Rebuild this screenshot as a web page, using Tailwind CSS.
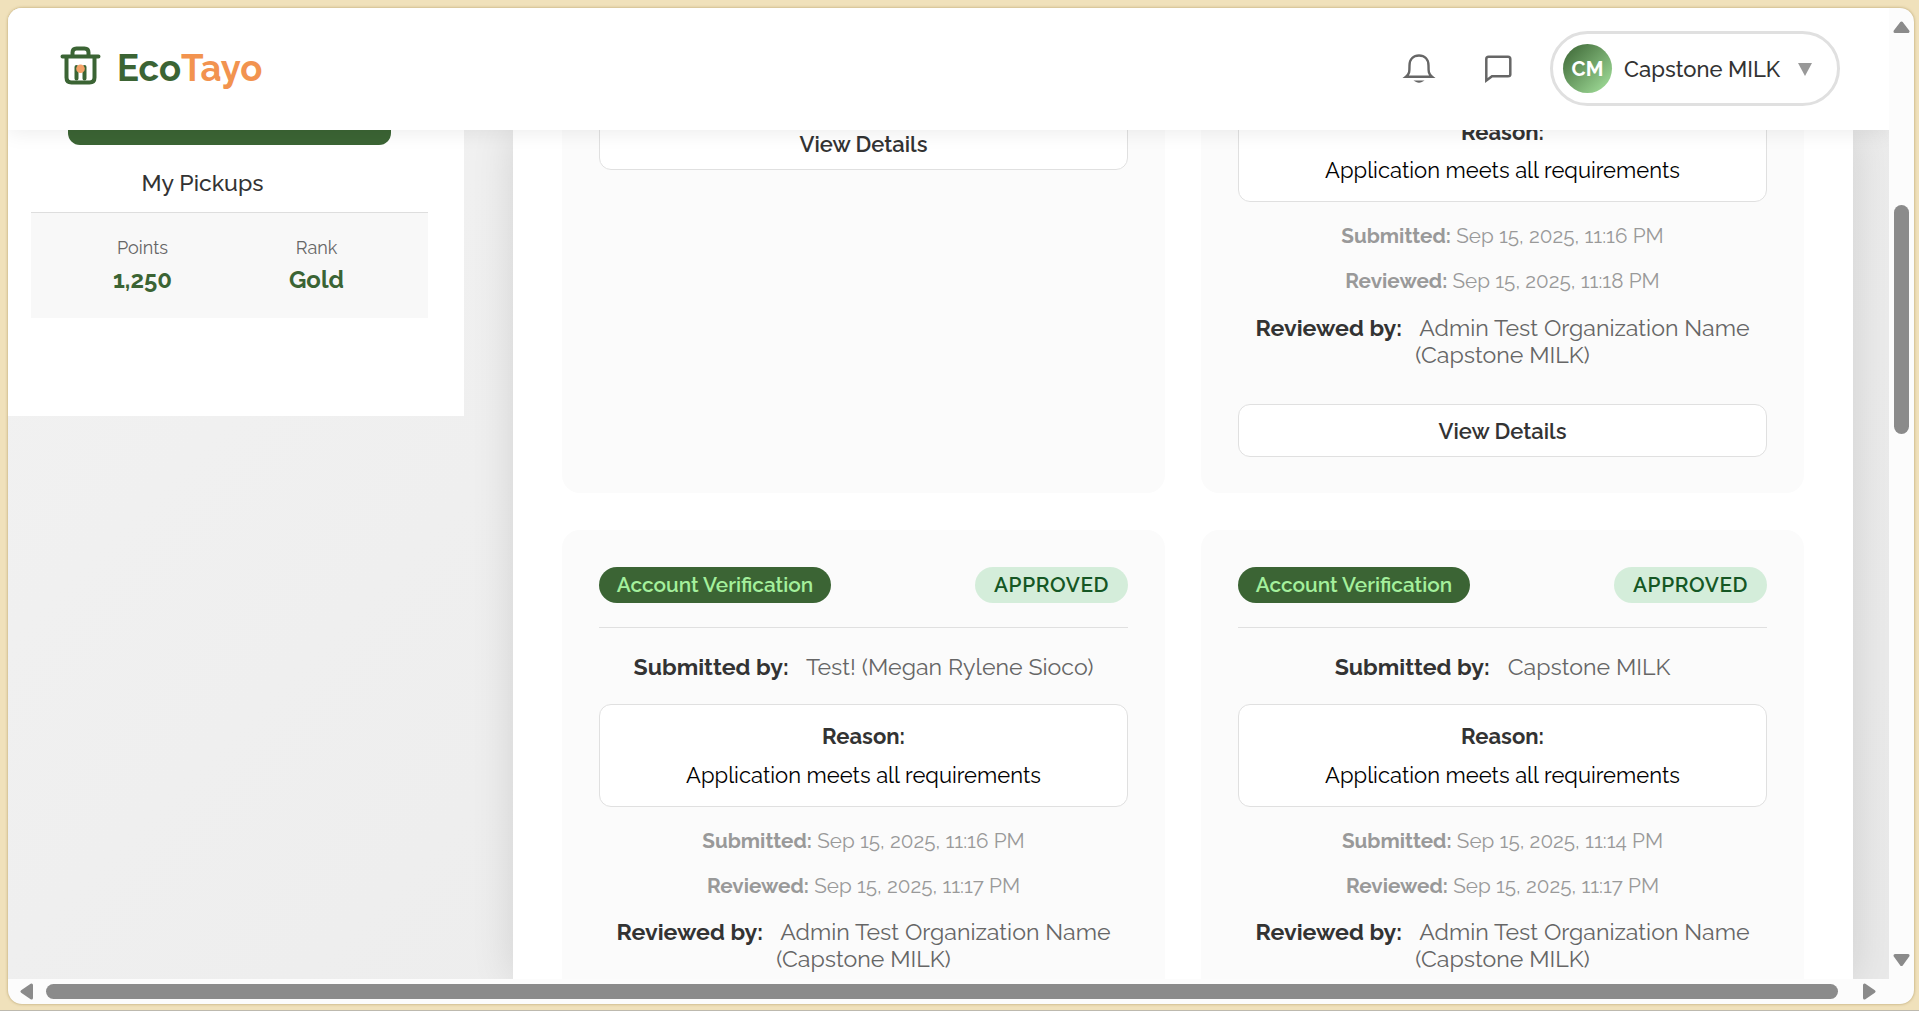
<!DOCTYPE html>
<html lang="en">
<head>
<meta charset="utf-8">
<title>EcoTayo</title>
<script src="https://cdn.jsdelivr.net/npm/@tailwindcss/browser@4"></script>
</head>
<body class="h-screen overflow-hidden bg-[#f0e1bb] font-['Raleway','Lato',sans-serif] text-[#333]">
<div class="flex h-[1011px] w-[1919px] flex-col justify-between border-b border-[#bdb9ae] pt-2 pl-2">
  <div class="flex h-[996px] w-[1906px] flex-col overflow-hidden rounded-[14px] bg-[#fcfcfc] shadow-[0_0_3px_rgba(120,90,20,0.5)]">
    <div class="flex h-[971px]">
      <!-- Page viewport -->
      <div class="flex w-[1881px] flex-col overflow-hidden bg-linear-135 from-[#f2f2f2] to-[#e9e9e9]">
        <header class="z-10 flex h-[122px] shrink-0 items-center justify-between bg-white pr-[49px] pl-[52px] shadow-[0_2px_20px_rgba(0,0,0,0.08)]">
          <div class="flex items-center pb-[3px]">
            <svg class="-mt-[6px] h-[42px] w-[42px]" viewBox="0 0 42 42" fill="none" stroke="#3b6434" stroke-width="4" stroke-linecap="round" stroke-linejoin="round">
              <path d="M2.5 12.5H38.5M6.500 12.500V33.500Q6.500 38.500 11.500 38.500H29.500Q34.500 38.500 34.500 33.500V12.500M12.500 11V8.500Q12.500 4.500 16.500 4.500H24.500Q28.500 4.500 28.500 8.500V11"/>
              <path d="M16.500 23V34.500M24.500 23V34.500"/>
              <circle cx="20.500" cy="24.700" r="4.300" fill="#f4a268" stroke="none"/>
            </svg>
            <div class="mt-[3px] ml-[15px] flex text-[36.500px] leading-[44px] font-bold text-[#3b6434]"><span>Eco</span><span class="text-[#f2934f]">Tayo</span></div>
          </div>
          <div class="flex items-center pb-px">
            <svg class="-mt-[4px] h-[36px] w-[36px]" viewBox="0 0 36 36" fill="none" stroke="#666" stroke-width="2.400">
              <path d="M5 27.700C8.500 25 8.500 22.500 8.500 16.500C8.500 10 12.500 6.500 18 6.500C23.500 6.500 27.500 10 27.500 16.500C27.500 22.500 27.500 25 31 27.700Z"/>
              <path d="M15.500 32.300Q18 33.700 20.500 32.300Z" stroke-width="1.600"/>
            </svg>
            <svg class="-mt-[2px] ml-[43px] h-[36px] w-[36px]" viewBox="0 0 36 36" fill="none" stroke="#666" stroke-width="2.500">
              <path d="M6.300 30.500V9Q6.300 6.700 8.600 6.700H28Q30.300 6.700 30.300 9V24.500Q30.300 26.300 28 26.300H12Z"/>
            </svg>
            <div class="ml-[34px] flex h-[75px] w-[290px] items-center rounded-full border-[3px] border-[#e0e0e0] bg-white pl-[10px]">
              <div class="flex size-[49px] items-center justify-center rounded-full bg-linear-135 from-[#3b6434] to-[#a8e6a0] pt-px text-[20.500px] font-bold text-white">CM</div>
              <div class="ml-[12px] w-[157px] pt-[2px] text-[22px] font-medium whitespace-nowrap">Capstone MILK</div>
              <svg class="mt-px ml-[17px] h-[13px] w-[14px]" viewBox="0 0 14 13"><path d="M0 0H14L7 13Z" fill="#999"/></svg>
            </div>
          </div>
        </header>

        <div class="flex h-[849px] items-start">
          <!-- Sidebar -->
          <aside class="h-[286px] w-[456px] bg-white pl-[23px]">
            <div class="ml-[37px] h-[15px] w-[323px] rounded-b-xl bg-[#3b6434]"></div>
            <div class="mt-[24px] h-[43px] w-[343px] text-center text-[23px] leading-[27px] font-medium">My Pickups</div>
            <div class="flex h-[106px] w-[397px] justify-center border-t border-[#dedede] bg-[#f8f8f8] pt-[23px] text-center">
              <div class="w-[174px]">
                <div class="text-[18px] leading-[24px] text-[#666]">Points</div>
                <div class="mt-[6px] text-[24px] leading-[28px] font-bold text-[#3b6434]">1,250</div>
              </div>
              <div class="w-[174px]">
                <div class="text-[18px] leading-[24px] text-[#666]">Rank</div>
                <div class="mt-[6px] text-[24px] leading-[28px] font-bold text-[#3b6434]">Gold</div>
              </div>
            </div>
          </aside>

          <!-- Applications panel -->
          <main class="ml-[49px] grid h-[849px] w-[1340px] grid-cols-[603px_603px] content-start gap-x-[36px] gap-y-[37px] bg-white pl-[49px] shadow-[0_0_40px_rgba(0,0,0,0.12)]">
            <section class="h-[363px] rounded-b-[18px] bg-[#fbfbfb] px-[37px]">
              <div class="-mt-[13px] h-[53px] rounded-xl border border-[#e0e0e0] bg-white pt-[13px] text-center text-[22px] leading-[26px] font-semibold">View Details</div>
            </section>
            <section class="h-[363px] rounded-b-[18px] bg-[#fbfbfb] px-[37px] text-center">
              <div class="-mt-[31px] h-[103px] rounded-xl border border-[#e0e0e0] bg-white pt-[19px]">
                <div class="text-[22px] leading-[26px] font-bold">Reason:</div>
                <div class="mt-[12px] text-[22px] leading-[26px] text-black">Application meets all requirements</div>
              </div>
              <div class="mt-[22px] text-[20.700px] leading-[24px] text-[#999]"><b>Submitted:</b> Sep 15, 2025, 11:16 PM</div>
              <div class="mt-[21px] text-[20.700px] leading-[24px] text-[#999]"><b>Reviewed:</b> Sep 15, 2025, 11:18 PM</div>
              <div class="mt-[21px] text-[23.150px] leading-[27px]"><b class="mr-[12px]">Reviewed by:</b> <span class="text-[#666]">Admin Test Organization Name<br>(Capstone MILK)</span></div>
              <div class="mt-[36px] h-[53px] rounded-xl border border-[#e0e0e0] bg-white pt-[13px] text-center text-[22px] leading-[26px] font-semibold">View Details</div>
            </section>

            <section class="h-[500px] rounded-[18px] bg-[#fbfbfb] px-[37px] pt-[37px] text-center">
              <div class="flex h-[61px] items-start justify-between border-b border-[#e0e0e0] text-[20.800px] leading-[36px]">
                <span class="h-[36px] w-[232px] rounded-full bg-[#3b6434] font-semibold text-[#a4f09c]">Account Verification</span>
                <span class="h-[36px] w-[153px] rounded-full bg-[#d4edda] font-semibold tracking-[0.600px] text-[#155724]">APPROVED</span>
              </div>
              <div class="mt-[25px] text-[23.150px] leading-[27px]"><b class="mr-[12px]">Submitted by:</b> <span class="text-[#666]">Test! (Megan Rylene Sioco)</span></div>
              <div class="mt-[24px] h-[103px] rounded-xl border border-[#e0e0e0] bg-white pt-[18px]">
                <div class="text-[22px] leading-[26px] font-bold">Reason:</div>
                <div class="mt-[13px] text-[22px] leading-[26px] text-black">Application meets all requirements</div>
              </div>
              <div class="mt-[22px] text-[20.700px] leading-[24px] text-[#999]"><b>Submitted:</b> Sep 15, 2025, 11:16 PM</div>
              <div class="mt-[21px] text-[20.700px] leading-[24px] text-[#999]"><b>Reviewed:</b> Sep 15, 2025, 11:17 PM</div>
              <div class="mt-[20px] text-[23.150px] leading-[27px]"><b class="mr-[12px]">Reviewed by:</b> <span class="text-[#666]">Admin Test Organization Name<br>(Capstone MILK)</span></div>
            </section>
            <section class="h-[500px] rounded-[18px] bg-[#fbfbfb] px-[37px] pt-[37px] text-center">
              <div class="flex h-[61px] items-start justify-between border-b border-[#e0e0e0] text-[20.800px] leading-[36px]">
                <span class="h-[36px] w-[232px] rounded-full bg-[#3b6434] font-semibold text-[#a4f09c]">Account Verification</span>
                <span class="h-[36px] w-[153px] rounded-full bg-[#d4edda] font-semibold tracking-[0.600px] text-[#155724]">APPROVED</span>
              </div>
              <div class="mt-[25px] text-[23.150px] leading-[27px]"><b class="mr-[12px]">Submitted by:</b> <span class="text-[#666]">Capstone MILK</span></div>
              <div class="mt-[24px] h-[103px] rounded-xl border border-[#e0e0e0] bg-white pt-[18px]">
                <div class="text-[22px] leading-[26px] font-bold">Reason:</div>
                <div class="mt-[13px] text-[22px] leading-[26px] text-black">Application meets all requirements</div>
              </div>
              <div class="mt-[22px] text-[20.700px] leading-[24px] text-[#999]"><b>Submitted:</b> Sep 15, 2025, 11:14 PM</div>
              <div class="mt-[21px] text-[20.700px] leading-[24px] text-[#999]"><b>Reviewed:</b> Sep 15, 2025, 11:17 PM</div>
              <div class="mt-[20px] text-[23.150px] leading-[27px]"><b class="mr-[12px]">Reviewed by:</b> <span class="text-[#666]">Admin Test Organization Name<br>(Capstone MILK)</span></div>
            </section>
          </main>
        </div>
      </div>

      <!-- Vertical scrollbar -->
      <div class="flex w-[25px] flex-col items-center pt-[13px]">
        <svg class="h-[12px] w-[17px]" viewBox="0 0 17 12"><path d="M8.500 2L15 10.500H2Z" fill="#8b8b8b" stroke="#8b8b8b" stroke-width="3" stroke-linejoin="round"/></svg>
        <div class="mt-[172px] h-[229px] w-[15px] rounded-full bg-[#8b8b8b]"></div>
        <svg class="mt-[520px] h-[12px] w-[17px]" viewBox="0 0 17 12"><path d="M8.500 10.500L15 1.500H2Z" fill="#8b8b8b" stroke="#8b8b8b" stroke-width="3" stroke-linejoin="round"/></svg>
      </div>
    </div>
    <!-- Horizontal scrollbar -->
    <div class="flex h-[25px] items-center pl-[12px]">
      <svg class="h-[17px] w-[13px]" viewBox="0 0 13 17"><path d="M2 8.500L11.500 2V15Z" fill="#8b8b8b" stroke="#8b8b8b" stroke-width="3" stroke-linejoin="round"/></svg>
      <div class="ml-[13px] h-[15px] w-[1792px] rounded-full bg-[#8b8b8b]"></div>
      <svg class="ml-[25px] h-[17px] w-[13px]" viewBox="0 0 13 17"><path d="M11 8.500L1.500 2V15Z" fill="#8b8b8b" stroke="#8b8b8b" stroke-width="3" stroke-linejoin="round"/></svg>
    </div>
  </div>
</div>
</body>
</html>
